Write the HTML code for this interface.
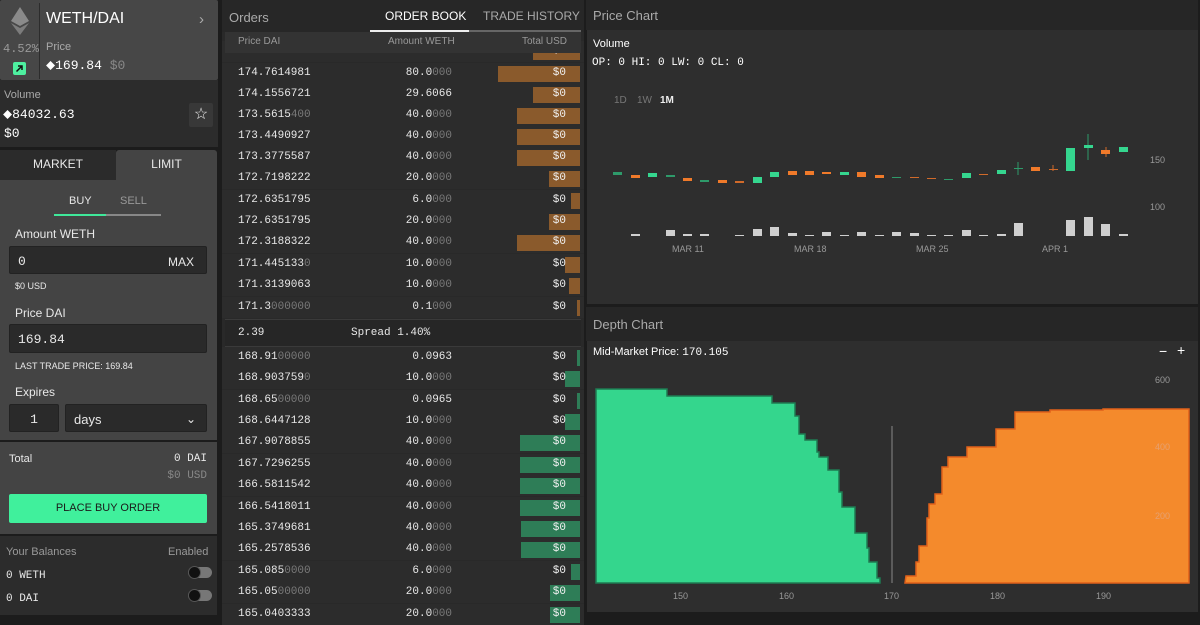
<!DOCTYPE html>
<html><head><meta charset="utf-8"><style>
*{box-sizing:border-box;margin:0;padding:0}
body{width:1200px;height:615px;background:#1c1c1c;position:relative;overflow:hidden;font-family:"Liberation Sans",sans-serif;color:#e8e8e8;font-size:12px}
.a{position:absolute}
.m{font-family:"Liberation Mono",monospace}
.d{color:#7a7a7a}
.r{position:absolute;left:222px;width:362px;height:21px;background:#2c2c2c;font-family:"Liberation Mono",monospace;font-size:11px;line-height:21px}
.r .p{position:absolute;left:16px}
.r .q{position:absolute;right:132px}
.r .b{position:absolute;right:4px;top:3px;height:16px}
.r .t{position:absolute;right:18px;color:#f0f0f0}
.ask .b{background:#8a5a2c}
.bid .b{background:#2e7d57}
.inp{position:absolute;background:#2a2a2a;border:1px solid #222;border-radius:2px;font-size:13px;line-height:30px;padding-left:8px}
</style></head><body>

<!-- LEFT PANEL -->
<div class="a" style="left:0;top:0;width:218px;height:80px;background:#474747;border-radius:2px"></div>
<div class="a" style="left:39px;top:3px;width:1px;height:76px;background:#2c2c2c"></div>
<svg class="a" style="left:11px;top:7px" width="18" height="28" viewBox="0 0 18 28"><polygon points="9,0 18,14 9,19 0,14" fill="#8a8a8a"/><polygon points="9,21 18,16 9,28 0,16" fill="#7c7c7c"/></svg>
<div class="a m" style="left:3px;top:42px;font-size:12px;color:#999">4.52%</div>
<div class="a" style="left:13px;top:62px;width:13px;height:13px;background:#4ef0a0;border-radius:2px"><svg width="13" height="13"><path d="M3.5 9.5L9 4M5 4h4v4" stroke="#111" stroke-width="1.5" fill="none"/></svg></div>
<div class="a" style="left:46px;top:10px;font-size:16px;color:#fff">WETH/DAI</div>
<div class="a" style="left:199px;top:11px;font-size:15px;color:#aaa">›</div>
<div class="a" style="left:46px;top:41px;font-size:11px;color:#aaa">Price</div>
<div class="a m" style="left:46px;top:58px;font-size:13px;color:#fff">⬥169.84 <span style="color:#888">$0</span></div>

<div class="a" style="left:0;top:80px;width:218px;height:67px;background:#2c2c2c"></div>
<div class="a" style="left:4px;top:89px;font-size:11px;color:#aaa">Volume</div>
<div class="a m" style="left:3px;top:107px;font-size:13px;color:#fff">⬥84032.63</div>
<div class="a m" style="left:4px;top:126px;font-size:13px;color:#fff">$0</div>
<div class="a" style="left:189px;top:103px;width:24px;height:24px;background:#383838;border-radius:2px;text-align:center;line-height:24px;font-size:16px;color:#eee">☆</div>

<div class="a" style="left:0;top:150px;width:116px;height:30px;background:#2b2b2b;text-align:center;line-height:28px;font-size:12px">MARKET</div>
<div class="a" style="left:116px;top:150px;width:101px;height:30px;background:#444;border-radius:3px 3px 0 0;text-align:center;line-height:28px;font-size:12px">LIMIT</div>
<div class="a" style="left:0;top:180px;width:217px;height:260px;background:#444"></div>
<div class="a" style="left:69px;top:195px;font-size:11px">BUY</div>
<div class="a" style="left:120px;top:195px;font-size:11px;color:#999">SELL</div>
<div class="a" style="left:54px;top:214px;width:52px;height:2px;background:#3fe89a"></div>
<div class="a" style="left:106px;top:214px;width:55px;height:2px;background:#888"></div>
<div class="a" style="left:15px;top:227px;font-size:12px">Amount WETH</div>
<div class="inp m" style="left:9px;top:246px;width:198px;height:28px">0<span class="a" style="right:12px;top:0;font-family:'Liberation Sans',sans-serif;font-size:12px">MAX</span></div>
<div class="a" style="left:15px;top:281px;font-size:9px">$0 USD</div>
<div class="a" style="left:15px;top:306px;font-size:12px">Price DAI</div>
<div class="inp m" style="left:9px;top:324px;width:198px;height:29px">169.84</div>
<div class="a" style="left:15px;top:361px;font-size:9px">LAST TRADE PRICE: 169.84</div>
<div class="a" style="left:15px;top:385px;font-size:12px">Expires</div>
<div class="inp m" style="left:9px;top:404px;width:50px;height:28px;text-align:center;padding:0">1</div>
<div class="inp" style="left:65px;top:404px;width:142px;height:28px">days<span class="a" style="right:10px;top:-1px;font-size:12px">⌄</span></div>
<div class="a" style="left:0;top:442px;width:217px;height:92px;background:#444"></div>
<div class="a" style="left:9px;top:453px;font-size:11px">Total</div>
<div class="a m" style="right:993px;top:453px;font-size:11px">0 DAI</div>
<div class="a m" style="right:993px;top:470px;font-size:11px;color:#888">$0 USD</div>
<div class="a" style="left:9px;top:494px;width:198px;height:29px;background:#40f09c;border-radius:2px;color:#1a1a1a;text-align:center;line-height:29px;font-size:11px">PLACE BUY ORDER</div>
<div class="a" style="left:0;top:536px;width:217px;height:79px;background:#2c2c2c"></div>
<div class="a" style="left:6px;top:546px;font-size:11px;color:#999">Your Balances</div>
<div class="a" style="left:168px;top:546px;font-size:11px;color:#999">Enabled</div>
<div class="a m" style="left:6px;top:570px;font-size:11px">0 WETH</div>
<div class="a m" style="left:6px;top:593px;font-size:11px">0 DAI</div>
<div class="a" style="left:188px;top:567px;width:24px;height:11px;background:#777;border-radius:6px"></div><div class="a" style="left:188px;top:566px;width:13px;height:13px;background:#111;border-radius:50%;border:1px solid #555"></div>
<div class="a" style="left:188px;top:590px;width:24px;height:11px;background:#777;border-radius:6px"></div><div class="a" style="left:188px;top:589px;width:13px;height:13px;background:#111;border-radius:50%;border:1px solid #555"></div>

<!-- ORDERS -->
<div class="a" style="left:222px;top:0;width:362px;height:615px;background:#292929"></div>
<div class="r ask" style="top:41px"><span class="p">174.8203270</span><span class="q">17.0000</span><span class="b" style="width:47px"></span><span class="t">$0</span></div>
<div class="a" style="left:222px;top:0;width:362px;height:32px;background:#272727"></div>
<div class="a" style="left:229px;top:10px;font-size:13px;color:#aaa">Orders</div>
<div class="a" style="left:385px;top:9px;font-size:12px;color:#fff">ORDER BOOK</div>
<div class="a" style="left:483px;top:9px;font-size:12px;color:#aaa">TRADE HISTORY</div>
<div class="a" style="left:370px;top:30px;width:99px;height:2px;background:#eee"></div>
<div class="a" style="left:469px;top:30px;width:112px;height:2px;background:#666"></div>
<div class="a" style="left:225px;top:32px;width:356px;height:21px;background:#333;font-size:10px;color:#999;line-height:20px"><span class="a" style="left:13px">Price DAI</span><span class="a" style="left:163px">Amount WETH</span><span class="a" style="left:297px">Total USD</span></div>

<div class="r ask" style="top:63px"><span class="p">174.7614981</span><span class="q">80.0<span class="d">000</span></span><span class="b" style="width:82px"></span><span class="t">$0</span></div>
<div class="r ask" style="top:84px"><span class="p">174.1556721</span><span class="q">29.6066</span><span class="b" style="width:47px"></span><span class="t">$0</span></div>
<div class="r ask" style="top:105px"><span class="p">173.5615<span class="d">400</span></span><span class="q">40.0<span class="d">000</span></span><span class="b" style="width:63px"></span><span class="t">$0</span></div>
<div class="r ask" style="top:126px"><span class="p">173.4490927</span><span class="q">40.0<span class="d">000</span></span><span class="b" style="width:63px"></span><span class="t">$0</span></div>
<div class="r ask" style="top:147px"><span class="p">173.3775587</span><span class="q">40.0<span class="d">000</span></span><span class="b" style="width:63px"></span><span class="t">$0</span></div>
<div class="r ask" style="top:168px"><span class="p">172.7198222</span><span class="q">20.0<span class="d">000</span></span><span class="b" style="width:31px"></span><span class="t">$0</span></div>
<div class="r ask" style="top:190px"><span class="p">172.6351795</span><span class="q">6.0<span class="d">000</span></span><span class="b" style="width:9px"></span><span class="t">$0</span></div>
<div class="r ask" style="top:211px"><span class="p">172.6351795</span><span class="q">20.0<span class="d">000</span></span><span class="b" style="width:31px"></span><span class="t">$0</span></div>
<div class="r ask" style="top:232px"><span class="p">172.3188322</span><span class="q">40.0<span class="d">000</span></span><span class="b" style="width:63px"></span><span class="t">$0</span></div>
<div class="r ask" style="top:254px"><span class="p">171.445133<span class="d">0</span></span><span class="q">10.0<span class="d">000</span></span><span class="b" style="width:15px"></span><span class="t">$0</span></div>
<div class="r ask" style="top:275px"><span class="p">171.3139063</span><span class="q">10.0<span class="d">000</span></span><span class="b" style="width:11px"></span><span class="t">$0</span></div>
<div class="r ask" style="top:297px"><span class="p">171.3<span class="d">000000</span></span><span class="q">0.1<span class="d">000</span></span><span class="b" style="width:3px"></span><span class="t">$0</span></div>

<div class="a m" style="left:225px;top:319px;width:356px;height:28px;background:#262626;border-top:1px solid #3a3a3a;border-bottom:1px solid #3a3a3a;font-size:11px;line-height:26px"><span class="a" style="left:13px">2.39</span><span class="a" style="left:126px">Spread 1.40%</span></div>

<div class="r bid" style="top:347px"><span class="p">168.91<span class="d">00000</span></span><span class="q">0.0963</span><span class="b" style="width:3px"></span><span class="t">$0</span></div>
<div class="r bid" style="top:368px"><span class="p">168.903759<span class="d">0</span></span><span class="q">10.0<span class="d">000</span></span><span class="b" style="width:15px"></span><span class="t">$0</span></div>
<div class="r bid" style="top:390px"><span class="p">168.65<span class="d">00000</span></span><span class="q">0.0965</span><span class="b" style="width:3px"></span><span class="t">$0</span></div>
<div class="r bid" style="top:411px"><span class="p">168.6447128</span><span class="q">10.0<span class="d">000</span></span><span class="b" style="width:15px"></span><span class="t">$0</span></div>
<div class="r bid" style="top:432px"><span class="p">167.9078855</span><span class="q">40.0<span class="d">000</span></span><span class="b" style="width:60px"></span><span class="t">$0</span></div>
<div class="r bid" style="top:454px"><span class="p">167.7296255</span><span class="q">40.0<span class="d">000</span></span><span class="b" style="width:60px"></span><span class="t">$0</span></div>
<div class="r bid" style="top:475px"><span class="p">166.5811542</span><span class="q">40.0<span class="d">000</span></span><span class="b" style="width:60px"></span><span class="t">$0</span></div>
<div class="r bid" style="top:497px"><span class="p">166.5418011</span><span class="q">40.0<span class="d">000</span></span><span class="b" style="width:60px"></span><span class="t">$0</span></div>
<div class="r bid" style="top:518px"><span class="p">165.3749681</span><span class="q">40.0<span class="d">000</span></span><span class="b" style="width:59px"></span><span class="t">$0</span></div>
<div class="r bid" style="top:539px"><span class="p">165.2578536</span><span class="q">40.0<span class="d">000</span></span><span class="b" style="width:59px"></span><span class="t">$0</span></div>
<div class="r bid" style="top:561px"><span class="p">165.085<span class="d">0000</span></span><span class="q">6.0<span class="d">000</span></span><span class="b" style="width:9px"></span><span class="t">$0</span></div>
<div class="r bid" style="top:582px"><span class="p">165.05<span class="d">00000</span></span><span class="q">20.0<span class="d">000</span></span><span class="b" style="width:30px"></span><span class="t">$0</span></div>
<div class="r bid" style="top:604px"><span class="p">165.0403333</span><span class="q">20.0<span class="d">000</span></span><span class="b" style="width:30px"></span><span class="t">$0</span></div>

<!-- PRICE CHART -->
<div class="a" style="left:586px;top:0;width:612px;height:30px;background:#262626"></div>
<div class="a" style="left:593px;top:8px;font-size:13px;color:#aaa">Price Chart</div>
<div class="a" style="left:587px;top:30px;width:611px;height:274px;background:#2e2e2e"></div>
<div class="a" style="left:593px;top:38px;font-size:11px;color:#fff">Volume</div>
<div class="a m" style="left:592px;top:57px;font-size:11px;color:#fff">OP: 0 HI: 0 LW: 0 CL: 0</div>
<div class="a" style="left:614px;top:95px;font-size:10px;color:#777">1D</div>
<div class="a" style="left:637px;top:95px;font-size:10px;color:#777">1W</div>
<div class="a" style="left:660px;top:95px;font-size:10px;color:#eee;font-weight:bold">1M</div>
<svg class="a" style="left:0;top:0" width="1200" height="615">
<g font-family="Liberation Sans" font-size="9" fill="#999">
<text x="1150" y="163">150</text><text x="1150" y="210">100</text>
<text x="672" y="252">MAR 11</text><text x="794" y="252">MAR 18</text><text x="916" y="252">MAR 25</text><text x="1042" y="252">APR 1</text>
</g>
<g id="c"></g>
<!-- candles: x=613+i*17.45 -->
<g stroke-width="1">
<rect x="613" y="172" width="9" height="3" fill="#2e9a6a"/>
<rect x="631" y="175" width="9" height="3" fill="#f07a2a"/>
<rect x="648" y="173" width="9" height="4" fill="#35d68f"/>
<rect x="666" y="175" width="9" height="2" fill="#2e9a6a"/>
<rect x="683" y="178" width="9" height="3" fill="#f07a2a"/>
<rect x="700" y="180" width="9" height="2" fill="#2e9a6a"/>
<rect x="718" y="180" width="9" height="3" fill="#f07a2a"/>
<rect x="735" y="181" width="9" height="2" fill="#d06a2a"/>
<rect x="753" y="177" width="9" height="6" fill="#35d68f"/>
<rect x="770" y="172" width="9" height="5" fill="#35d68f"/>
<rect x="788" y="171" width="9" height="4" fill="#f07a2a"/>
<rect x="805" y="171" width="9" height="4" fill="#f07a2a"/>
<rect x="822" y="172" width="9" height="2" fill="#f07a2a"/>
<rect x="840" y="172" width="9" height="3" fill="#35d68f"/>
<rect x="857" y="172" width="9" height="5" fill="#f07a2a"/>
<rect x="875" y="175" width="9" height="3" fill="#f07a2a"/>
<rect x="892" y="177" width="9" height="1" fill="#2e9a6a"/>
<rect x="910" y="177" width="9" height="1" fill="#d06a2a"/>
<rect x="927" y="178" width="9" height="1" fill="#d06a2a"/>
<rect x="944" y="179" width="9" height="1" fill="#2e9a6a"/>
<rect x="962" y="173" width="9" height="5" fill="#35d68f"/>
<rect x="979" y="174" width="9" height="1" fill="#d06a2a"/>
<rect x="997" y="170" width="9" height="4" fill="#35d68f"/>
<line x1="1018" y1="162" x2="1018" y2="175" stroke="#2e9a6a"/><rect x="1014" y="168" width="9" height="1" fill="#2e9a6a"/>
<rect x="1031" y="167" width="9" height="4" fill="#f07a2a"/>
<line x1="1053" y1="165" x2="1053" y2="171" stroke="#d06a2a"/><rect x="1049" y="169" width="9" height="1" fill="#d06a2a"/>
<rect x="1066" y="148" width="9" height="23" fill="#35d68f"/>
<line x1="1088" y1="134" x2="1088" y2="160" stroke="#2e9a6a"/><rect x="1084" y="145" width="9" height="3" fill="#35d68f"/>
<line x1="1106" y1="147" x2="1106" y2="157" stroke="#d06a2a"/><rect x="1101" y="150" width="9" height="4" fill="#f07a2a"/>
<rect x="1119" y="147" width="9" height="5" fill="#35d68f"/>
</g>
<g fill="#cfcfcf">
<rect x="631" y="234" width="9" height="2"/>
<rect x="666" y="230" width="9" height="6"/>
<rect x="683" y="234" width="9" height="2"/>
<rect x="700" y="234" width="9" height="2"/>
<rect x="735" y="235" width="9" height="1"/>
<rect x="753" y="229" width="9" height="7"/>
<rect x="770" y="227" width="9" height="9"/>
<rect x="788" y="233" width="9" height="3"/>
<rect x="805" y="235" width="9" height="1"/>
<rect x="822" y="232" width="9" height="4"/>
<rect x="840" y="235" width="9" height="1"/>
<rect x="857" y="232" width="9" height="4"/>
<rect x="875" y="235" width="9" height="1"/>
<rect x="892" y="232" width="9" height="4"/>
<rect x="910" y="233" width="9" height="3"/>
<rect x="927" y="235" width="9" height="1"/>
<rect x="944" y="235" width="9" height="1"/>
<rect x="962" y="230" width="9" height="6"/>
<rect x="979" y="235" width="9" height="1"/>
<rect x="997" y="234" width="9" height="2"/>
<rect x="1014" y="223" width="9" height="13"/>
<rect x="1066" y="220" width="9" height="16"/>
<rect x="1084" y="217" width="9" height="19"/>
<rect x="1101" y="224" width="9" height="12"/>
<rect x="1119" y="234" width="9" height="2"/>
</g>
</svg>

<!-- DEPTH CHART -->
<div class="a" style="left:586px;top:307px;width:612px;height:34px;background:#262626"></div>
<div class="a" style="left:593px;top:317px;font-size:13px;color:#aaa">Depth Chart</div>
<div class="a" style="left:587px;top:341px;width:611px;height:271px;background:#2e2e2e"></div>
<div class="a" style="left:593px;top:346px;font-size:11px;color:#fff">Mid-Market Price: <span class="m">170.105</span></div>
<div class="a" style="left:1159px;top:343px;font-size:14px;color:#fff">−</div>
<div class="a" style="left:1177px;top:342px;font-size:14px;color:#fff">+</div>
<svg class="a" style="left:0;top:0" width="1200" height="615">
<text x="1155" y="383" font-family="Liberation Sans" font-size="9" fill="#999">600</text>
<polygon fill="#34d68d" stroke="#1f7a52" stroke-width="1.5" points="596,583 596,389 667,389 667,396 772,396 772,403 795,403 795,416 799,416 799,434 805,434 805,440 817,440 817,452 819,452 819,457 828,457 828,470 839,470 839,492 842,492 842,507 855,507 855,533 867,533 867,548 869,548 869,562 877,562 877,578 880,578 880,583"/>
<polygon fill="#f48a2c" stroke="#e0601a" stroke-width="1.5" points="905,583 906,576 916,576 916,562 919,562 919,546 927,546 927,518 929,518 929,504 935,504 935,494 942,494 942,467 948,467 948,457 967,457 967,447 996,447 996,429 1015,429 1015,412 1050,412 1050,410 1103,410 1103,409 1189,409 1189,583"/>
<line x1="892" y1="426" x2="892" y2="583" stroke="#888" stroke-width="1"/>
<g font-family="Liberation Sans" font-size="9">
<text x="1155" y="450" fill="#e6a070">400</text><text x="1155" y="519" fill="#e6a070">200</text>
<g fill="#999"><text x="673" y="599">150</text><text x="779" y="599">160</text><text x="884" y="599">170</text><text x="990" y="599">180</text><text x="1096" y="599">190</text></g>
</g>
</svg>
</body></html>
